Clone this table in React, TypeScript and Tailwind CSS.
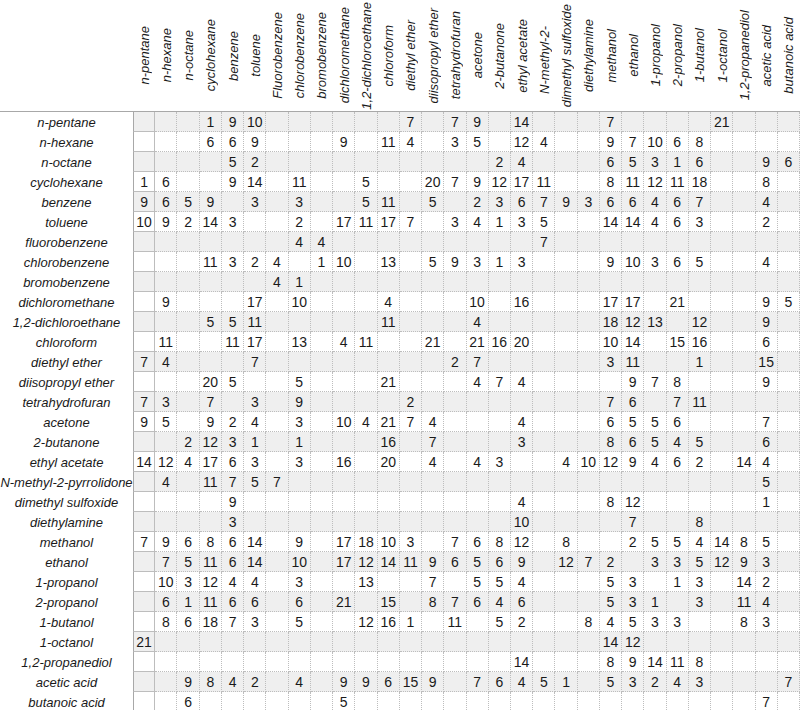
import React from "react";

const names = [
  "n-pentane",
  "n-hexane",
  "n-octane",
  "cyclohexane",
  "benzene",
  "toluene",
  "fluorobenzene",
  "chlorobenzene",
  "bromobenzene",
  "dichloromethane",
  "1,2-dichloroethane",
  "chloroform",
  "diethyl ether",
  "diisopropyl ether",
  "tetrahydrofuran",
  "acetone",
  "2-butanone",
  "ethyl acetate",
  "N-methyl-2-pyrrolidone",
  "dimethyl sulfoxide",
  "diethylamine",
  "methanol",
  "ethanol",
  "1-propanol",
  "2-propanol",
  "1-butanol",
  "1-octanol",
  "1,2-propanediol",
  "acetic acid",
  "butanoic acid",
];

const headers = names.map((n, i) =>
  i === 6 ? "Fluorobenzene" : i === 18 ? "N-methyl-2-" : n
);

const data: Record<number, number>[] = [
  { 3: 1, 4: 9, 5: 10, 12: 7, 14: 7, 15: 9, 17: 14, 21: 7, 26: 21 },
  { 3: 6, 4: 6, 5: 9, 9: 9, 11: 11, 12: 4, 14: 3, 15: 5, 17: 12, 18: 4, 21: 9, 22: 7, 23: 10, 24: 6, 25: 8 },
  { 4: 5, 5: 2, 16: 2, 17: 4, 21: 6, 22: 5, 23: 3, 24: 1, 25: 6, 28: 9, 29: 6 },
  { 0: 1, 1: 6, 4: 9, 5: 14, 7: 11, 10: 5, 13: 20, 14: 7, 15: 9, 16: 12, 17: 17, 18: 11, 21: 8, 22: 11, 23: 12, 24: 11, 25: 18, 28: 8 },
  { 0: 9, 1: 6, 2: 5, 3: 9, 5: 3, 7: 3, 10: 5, 11: 11, 13: 5, 15: 2, 16: 3, 17: 6, 18: 7, 19: 9, 20: 3, 21: 6, 22: 6, 23: 4, 24: 6, 25: 7, 28: 4 },
  { 0: 10, 1: 9, 2: 2, 3: 14, 4: 3, 7: 2, 9: 17, 10: 11, 11: 17, 12: 7, 14: 3, 15: 4, 16: 1, 17: 3, 18: 5, 21: 14, 22: 14, 23: 4, 24: 6, 25: 3, 28: 2 },
  { 7: 4, 8: 4, 18: 7 },
  { 3: 11, 4: 3, 5: 2, 6: 4, 8: 1, 9: 10, 11: 13, 13: 5, 14: 9, 15: 3, 16: 1, 17: 3, 21: 9, 22: 10, 23: 3, 24: 6, 25: 5, 28: 4 },
  { 6: 4, 7: 1 },
  { 1: 9, 5: 17, 7: 10, 11: 4, 15: 10, 17: 16, 21: 17, 22: 17, 24: 21, 28: 9, 29: 5 },
  { 3: 5, 4: 5, 5: 11, 11: 11, 15: 4, 21: 18, 22: 12, 23: 13, 25: 12, 28: 9 },
  { 1: 11, 4: 11, 5: 17, 7: 13, 9: 4, 10: 11, 13: 21, 15: 21, 16: 16, 17: 20, 21: 10, 22: 14, 24: 15, 25: 16, 28: 6 },
  { 0: 7, 1: 4, 5: 7, 14: 2, 15: 7, 21: 3, 22: 11, 25: 1, 28: 15 },
  { 3: 20, 4: 5, 7: 5, 11: 21, 15: 4, 16: 7, 17: 4, 22: 9, 23: 7, 24: 8, 28: 9 },
  { 0: 7, 1: 3, 3: 7, 5: 3, 7: 9, 12: 2, 21: 7, 22: 6, 24: 7, 25: 11 },
  { 0: 9, 1: 5, 3: 9, 4: 2, 5: 4, 7: 3, 9: 10, 10: 4, 11: 21, 12: 7, 13: 4, 17: 4, 21: 6, 22: 5, 23: 5, 24: 6, 28: 7 },
  { 2: 2, 3: 12, 4: 3, 5: 1, 7: 1, 11: 16, 13: 7, 17: 3, 21: 8, 22: 6, 23: 5, 24: 4, 25: 5, 28: 6 },
  { 0: 14, 1: 12, 2: 4, 3: 17, 4: 6, 5: 3, 7: 3, 9: 16, 11: 20, 13: 4, 15: 4, 16: 3, 19: 4, 20: 10, 21: 12, 22: 9, 23: 4, 24: 6, 25: 2, 27: 14, 28: 4 },
  { 1: 4, 3: 11, 4: 7, 5: 5, 6: 7, 28: 5 },
  { 4: 9, 17: 4, 21: 8, 22: 12, 28: 1 },
  { 4: 3, 17: 10, 22: 7, 25: 8 },
  { 0: 7, 1: 9, 2: 6, 3: 8, 4: 6, 5: 14, 7: 9, 9: 17, 10: 18, 11: 10, 12: 3, 14: 7, 15: 6, 16: 8, 17: 12, 19: 8, 22: 2, 23: 5, 24: 5, 25: 4, 26: 14, 27: 8, 28: 5 },
  { 1: 7, 2: 5, 3: 11, 4: 6, 5: 14, 7: 10, 9: 17, 10: 12, 11: 14, 12: 11, 13: 9, 14: 6, 15: 5, 16: 6, 17: 9, 19: 12, 20: 7, 21: 2, 23: 3, 24: 3, 25: 5, 26: 12, 27: 9, 28: 3 },
  { 1: 10, 2: 3, 3: 12, 4: 4, 5: 4, 7: 3, 10: 13, 13: 7, 15: 5, 16: 5, 17: 4, 21: 5, 22: 3, 24: 1, 25: 3, 27: 14, 28: 2 },
  { 1: 6, 2: 1, 3: 11, 4: 6, 5: 6, 7: 6, 9: 21, 11: 15, 13: 8, 14: 7, 15: 6, 16: 4, 17: 6, 21: 5, 22: 3, 23: 1, 25: 3, 27: 11, 28: 4 },
  { 1: 8, 2: 6, 3: 18, 4: 7, 5: 3, 7: 5, 10: 12, 11: 16, 12: 1, 14: 11, 16: 5, 17: 2, 20: 8, 21: 4, 22: 5, 23: 3, 24: 3, 27: 8, 28: 3 },
  { 0: 21, 21: 14, 22: 12 },
  { 17: 14, 21: 8, 22: 9, 23: 14, 24: 11, 25: 8 },
  { 2: 9, 3: 8, 4: 4, 5: 2, 7: 4, 9: 9, 10: 9, 11: 6, 12: 15, 13: 9, 15: 7, 16: 6, 17: 4, 18: 5, 19: 1, 21: 5, 22: 3, 23: 2, 24: 4, 25: 3, 29: 7 },
  { 2: 6, 9: 5, 28: 7 },
];

const cols = Array.from({ length: 30 }, (_, i) => i);

export default function App() {
  return (
    <div className="w-[800px] bg-white text-[#1a1a1a] font-['Liberation_Sans',Arial,sans-serif]">
      <div className="grid grid-cols-[133px_repeat(30,minmax(0,1fr))] h-[112px] border-b border-[#a8a8a8]">
        <div />
        {headers.map((h, i) => (
          <div
            key={i}
            className={
              i === 18
                ? "flex items-center justify-center pt-[8px] overflow-visible"
                : "flex items-center justify-center overflow-visible"
            }
          >
            <span className="[writing-mode:vertical-rl] rotate-180 whitespace-nowrap text-[13px] italic leading-none">
              {h}
            </span>
          </div>
        ))}
      </div>
      {names.map((n, r) => (
        <div
          key={r}
          className="grid grid-cols-[133px_repeat(30,minmax(0,1fr))] h-[20px]"
        >
          <div className="flex items-center justify-center whitespace-nowrap text-[13px] italic leading-none">
            {n}
          </div>
          {cols.map((c) => (
            <div
              key={c}
              className={
                (r % 2 === 0 ? "bg-[#efefef] " : "bg-white ") +
                (c === 0 ? "border-l border-l-[#a8a8a8] border-solid " : "") +
                "border-r border-b border-dotted border-[#bdbdbd] flex items-center justify-center text-[14px] leading-none"
              }
            >
              {data[r][c] ?? ""}
            </div>
          ))}
        </div>
      ))}
    </div>
  );
}
